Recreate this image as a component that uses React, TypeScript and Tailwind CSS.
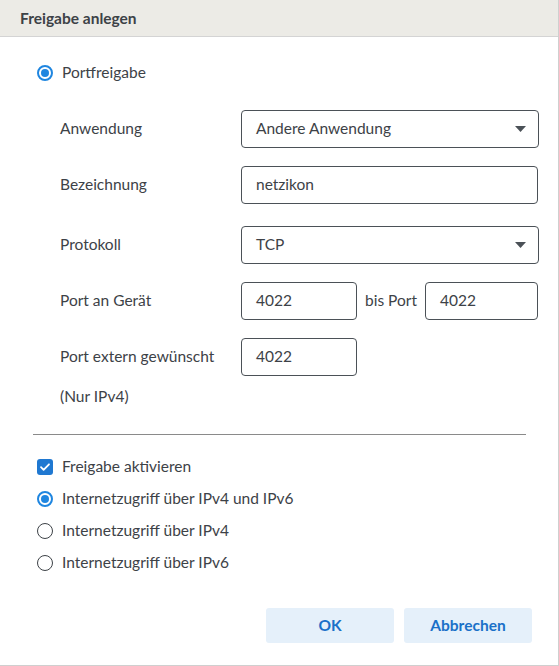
import React from 'react'

const font = { fontFamily: 'Lato, "Noto Sans", sans-serif' }

function Radio({ checked }: { checked?: boolean }) {
  return checked ? (
    <span className="flex h-4 w-4 shrink-0 items-center justify-center rounded-full border-2 border-[#1f86e0]">
      <span className="h-2 w-2 rounded-full bg-[#1f86e0]" />
    </span>
  ) : (
    <span className="h-4 w-4 shrink-0 rounded-full border-[1.5px] border-[#3d4247]" />
  )
}

function Checkbox() {
  return (
    <span className="flex h-4 w-4 shrink-0 items-center justify-center rounded-[3px] bg-[#1f78d1]">
      <svg width="12" height="12" viewBox="0 0 12 12" fill="none">
        <path d="M2 6.2l2.6 2.6L10 3.3" stroke="white" strokeWidth="1.8" strokeLinecap="round" strokeLinejoin="round" />
      </svg>
    </span>
  )
}

function Field({ value, select, w }: { value: string; select?: boolean; w: string }) {
  return (
    <div className={`flex h-[38px] shrink-0 items-center justify-between rounded-[4px] border border-[#4b5157] bg-white pl-[14px] pr-[12px] text-[15.5px] text-[#3d4247] ${w}`}>
      <span>{value}</span>
      {select && (
        <svg width="11" height="6" viewBox="0 0 11 6">
          <path d="M0 0h11L5.5 6z" fill="#4b5157" />
        </svg>
      )}
    </div>
  )
}

function Row({ label, children }: { label: string; children: React.ReactNode }) {
  return (
    <div className="flex items-center">
      <div className="w-[241px] shrink-0 whitespace-nowrap pl-[60px] text-[15.5px] text-[#3d4247]">{label}</div>
      {children}
    </div>
  )
}

export default function App() {
  return (
    <div className="h-[666px] w-[559px] border-r border-b border-[#cfcfcf] bg-white" style={font}>
      <div className="flex h-[37px] items-center border-b border-[#d4d4d4] bg-[#ecebe6] pl-5 pt-px text-[15.5px] font-bold text-[#3d4247]">
        Freigabe anlegen
      </div>

      <div className="mt-[27px] flex h-[18px] items-center gap-[9px] pl-[37px] text-[15.5px] text-[#3d4247]">
        <Radio checked />
        <span>Portfreigabe</span>
      </div>

      <div className="mt-[28px] flex flex-col gap-[18px]">
        <Row label="Anwendung">
          <Field value="Andere Anwendung" select w="w-[298px]" />
        </Row>
        <Row label="Bezeichnung">
          <Field value="netzikon" w="w-[297px]" />
        </Row>
        <div className="mt-[4px]">
          <Row label="Protokoll">
            <Field value="TCP" select w="w-[298px]" />
          </Row>
        </div>
        <Row label="Port an Gerät">
          <Field value="4022" w="w-[116px]" />
          <span className="ml-2 mr-2 whitespace-nowrap text-[15.5px] text-[#3d4247]">bis Port</span>
          <Field value="4022" w="w-[113px]" />
        </Row>
        <Row label="Port extern gewünscht">
          <Field value="4022" w="w-[116px]" />
        </Row>
      </div>
      <div className="mt-[10px] flex h-[22px] items-center pl-[60px] text-[15.5px] text-[#3d4247]">(Nur IPv4)</div>

      <div className="mx-[33px] mt-[26px] h-px w-[493px] bg-[#8a8a8a]" />

      <div className="mt-[23px] flex flex-col gap-[14px] pl-[37px] text-[15.5px] text-[#3d4247]">
        <div className="flex h-[18px] items-center gap-[9px]">
          <Checkbox />
          <span>Freigabe aktivieren</span>
        </div>
        <div className="flex h-[18px] items-center gap-[9px]">
          <Radio checked />
          <span>Internetzugriff über IPv4 und IPv6</span>
        </div>
        <div className="flex h-[18px] items-center gap-[9px]">
          <Radio />
          <span>Internetzugriff über IPv4</span>
        </div>
        <div className="flex h-[18px] items-center gap-[9px]">
          <Radio />
          <span>Internetzugriff über IPv6</span>
        </div>
      </div>

      <div className="mt-[36px] flex justify-end gap-[10px] pr-[26px]">
        <button className="h-[35px] w-[128px] rounded-[3px] bg-[#e5f0fa] text-[15.5px] font-bold text-[#1a70c8]">OK</button>
        <button className="h-[35px] w-[128px] rounded-[3px] bg-[#e5f0fa] text-[15.5px] font-bold text-[#1a70c8]">Abbrechen</button>
      </div>
    </div>
  )
}
